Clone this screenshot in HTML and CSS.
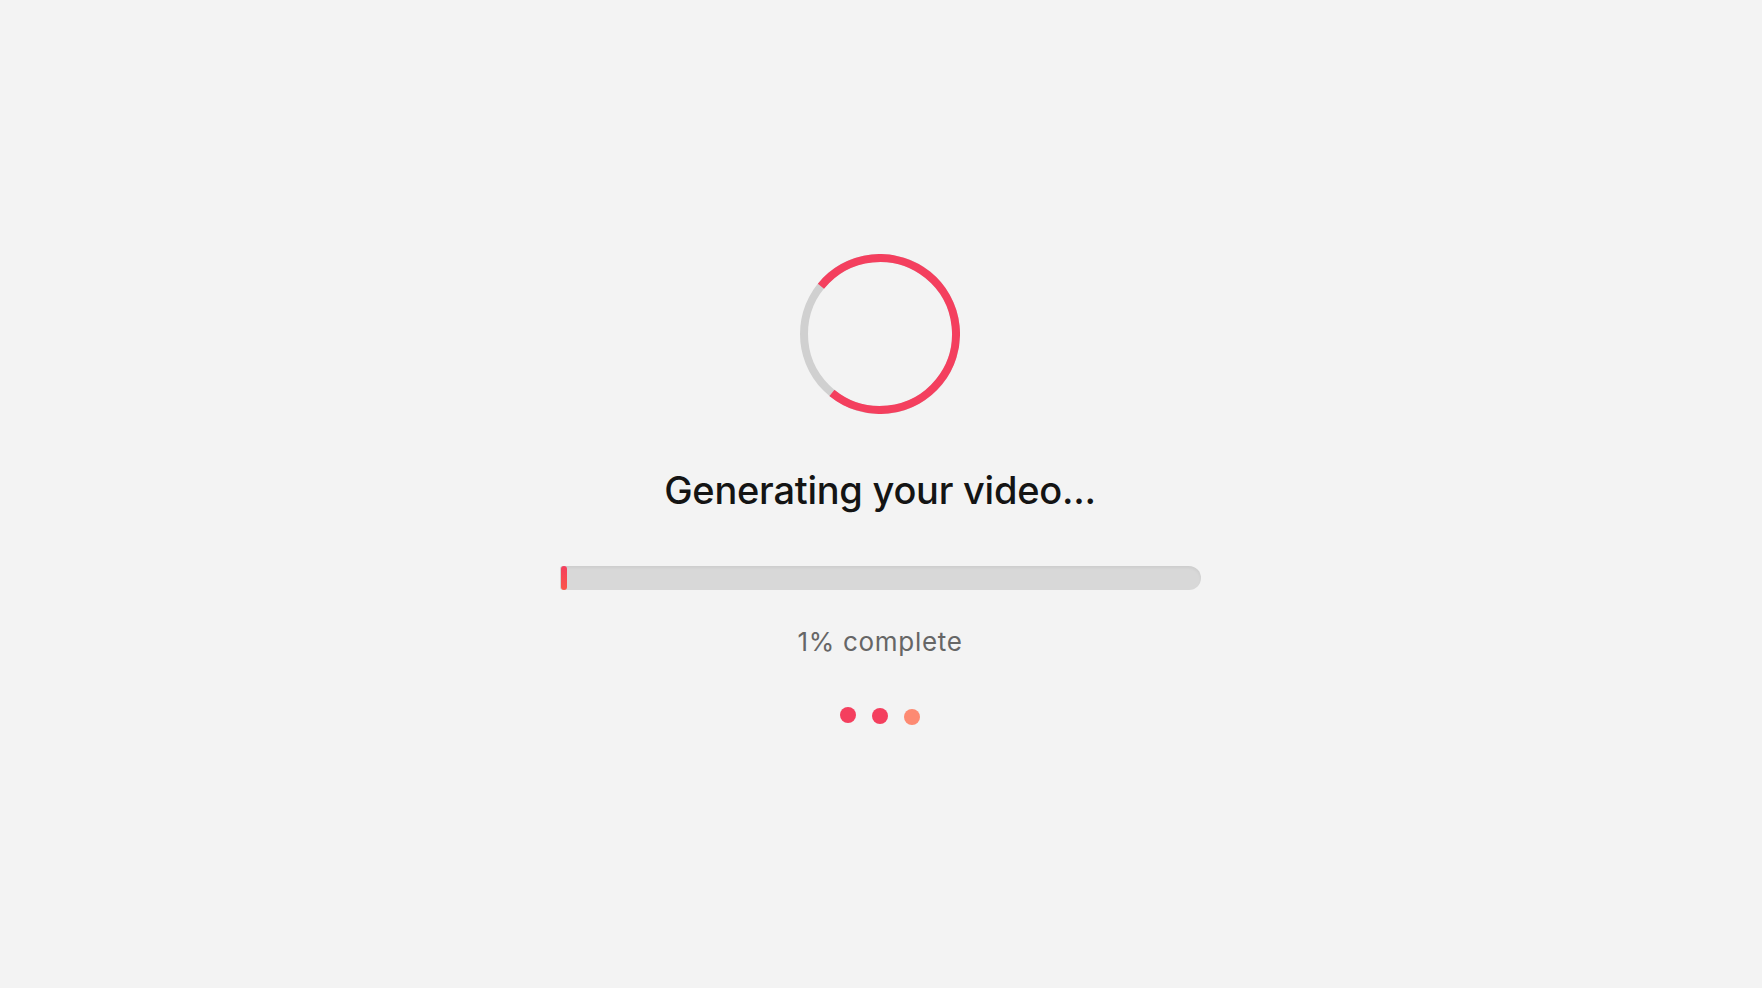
FILE: index.html
```html
<!DOCTYPE html>
<html lang="en">
<head>
<meta charset="utf-8">
<title>Generating your video</title>
<link rel="stylesheet" href="styles.css">
</head>
<body>
<main class="loader">
  <svg class="spinner" width="160" height="160" viewBox="0 0 160 160">
    <circle cx="80" cy="80" r="76" fill="none" stroke="#d0d0d0" stroke-width="8"/>
    <circle cx="80" cy="80" r="76" fill="none" stroke="#f43f5e" stroke-width="8" stroke-dasharray="357.8 477.5" transform="rotate(219 80 80)"/>
  </svg>
  <h1 class="title">Generating your video...</h1>
  <div class="bar"><div class="bar-fill" style="width: 1%"></div></div>
  <p class="percent">1% complete</p>
  <div class="dots">
    <span class="dot"></span>
    <span class="dot dot-mid"></span>
    <span class="dot dot-last"></span>
  </div>
</main>
</body>
</html>
```
FILE: styles.css
```css
html, body {
  margin: 0;
  padding: 0;
  background: #f3f3f3;
  font-family: Inter, "Liberation Sans", sans-serif;
}
.loader {
  display: flex;
  flex-direction: column;
  align-items: center;
  padding-top: 254px;
  padding-right: 2px;
}
.spinner {
  display: block;
}
.title {
  margin: 53px 0 0;
  font-size: 38px;
  line-height: 46px;
  font-weight: 500;
  color: #141414;
  letter-spacing: -0.25px;
}
.bar {
  margin-top: 53px;
  width: 641px;
  height: 24px;
  border-radius: 3px 12px 12px 3px;
  background: #d8d8d8;
  box-shadow: inset 0 2px 3px rgba(0,0,0,0.05);
  display: flex;
  padding-left: 1px;
  box-sizing: border-box;
}
.bar-fill {
  min-width: 6px;
  height: 100%;
  border-radius: 3px;
  background: linear-gradient(180deg, #f43f5e 0%, #fb5548 100%);
}
.percent {
  margin: 36px 0 0;
  font-size: 26px;
  line-height: 32px;
  color: #666666;
  letter-spacing: 0.7px;
}
.dots {
  margin-top: 49px;
  display: flex;
  gap: 16px;
  align-items: flex-start;
}
.dot {
  width: 16px;
  height: 16px;
  border-radius: 50%;
  background: #f43f5e;
}
.dot-mid {
  margin-top: 0.5px;
}
.dot-last {
  margin-top: 2px;
  background: #fd8a72;
}
```
